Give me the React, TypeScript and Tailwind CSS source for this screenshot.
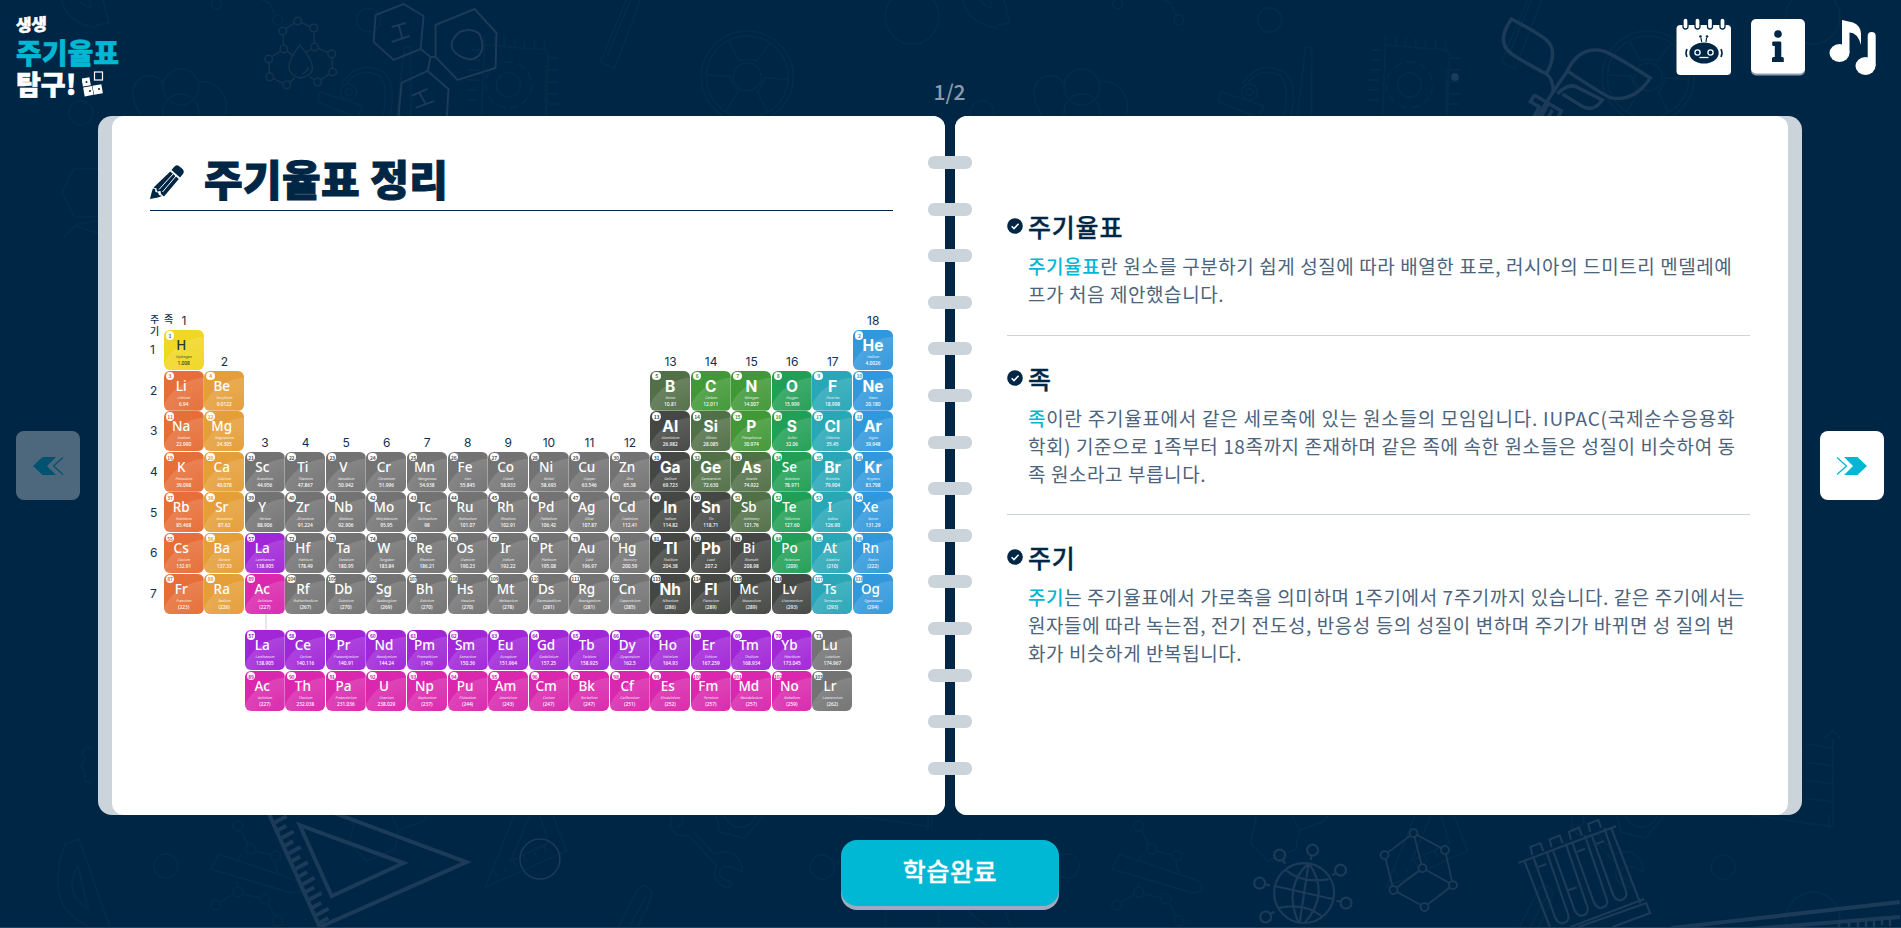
import React from 'react';
import clsx from 'clsx';

type Tone =
  | 'yellow' | 'orange' | 'amber' | 'gray' | 'dark' | 'olive'
  | 'green' | 'emerald' | 'teal' | 'blue' | 'purple' | 'pink';

interface ElementInfo {
  z: number;
  symbol: string;
  name: string;
  mass: string;
  col: number;
  row: number;
  tone: Tone;
}

const toneBg: Record<Tone, string> = {
  yellow: 'bg-[#f0d722]',
  orange: 'bg-[#e66e38]',
  amber: 'bg-[#e59e38]',
  gray: 'bg-[#737373]',
  dark: 'bg-[#444744]',
  olive: 'bg-[#527048]',
  green: 'bg-[#419837]',
  emerald: 'bg-[#229f56]',
  teal: 'bg-[#29a7b7]',
  blue: 'bg-[#3198dc]',
  purple: 'bg-[#a126d8]',
  pink: 'bg-[#da27ad]',
};

const toneText: Record<Tone, string> = {
  yellow: 'text-[#5a5a20]',
  orange: 'text-[#e66e38]',
  amber: 'text-[#e59e38]',
  gray: 'text-[#555]',
  dark: 'text-[#444744]',
  olive: 'text-[#527048]',
  green: 'text-[#419837]',
  emerald: 'text-[#229f56]',
  teal: 'text-[#29a7b7]',
  blue: 'text-[#3198dc]',
  purple: 'text-[#a126d8]',
  pink: 'text-[#da27ad]',
};

const periods: string[][] = [
  ['1 H Hydrogen 1.008 1', '2 He Helium 4.0026 18'],
  ['3 Li Lithium 6.94 1', '4 Be Beryllium 9.0122 2', '5 B Boron 10.81 13', '6 C Carbon 12.011 14', '7 N Nitrogen 14.007 15', '8 O Oxygen 15.999 16', '9 F Fluorine 18.998 17', '10 Ne Neon 20.180 18'],
  ['11 Na Sodium 22.990 1', '12 Mg Magnesium 24.305 2', '13 Al Aluminium 26.982 13', '14 Si Silicon 28.085 14', '15 P Phosphorus 30.974 15', '16 S Sulfur 32.06 16', '17 Cl Chlorine 35.45 17', '18 Ar Argon 39.948 18'],
  ['19 K Potassium 39.098 1', '20 Ca Calcium 40.078 2', '21 Sc Scandium 44.956 3', '22 Ti Titanium 47.867 4', '23 V Vanadium 50.942 5', '24 Cr Chromium 51.996 6', '25 Mn Manganese 54.938 7', '26 Fe Iron 55.845 8', '27 Co Cobalt 58.933 9', '28 Ni Nickel 58.693 10', '29 Cu Copper 63.546 11', '30 Zn Zinc 65.38 12', '31 Ga Gallium 69.723 13', '32 Ge Germanium 72.630 14', '33 As Arsenic 74.922 15', '34 Se Selenium 78.971 16', '35 Br Bromine 79.904 17', '36 Kr Krypton 83.798 18'],
  ['37 Rb Rubidium 85.468 1', '38 Sr Strontium 87.62 2', '39 Y Yttrium 88.906 3', '40 Zr Zirconium 91.224 4', '41 Nb Niobium 92.906 5', '42 Mo Molybdenum 95.95 6', '43 Tc Technetium 98 7', '44 Ru Ruthenium 101.07 8', '45 Rh Rhodium 102.91 9', '46 Pd Palladium 106.42 10', '47 Ag Silver 107.87 11', '48 Cd Cadmium 112.41 12', '49 In Indium 114.82 13', '50 Sn Tin 118.71 14', '51 Sb Antimony 121.76 15', '52 Te Tellurium 127.60 16', '53 I Iodine 126.90 17', '54 Xe Xenon 131.29 18'],
  ['55 Cs Cesium 132.91 1', '56 Ba Barium 137.33 2', '57 La Lanthanum 138.905 3', '72 Hf Hafnium 178.49 4', '73 Ta Tantalum 180.95 5', '74 W Tungsten 183.84 6', '75 Re Rhenium 186.21 7', '76 Os Osmium 190.23 8', '77 Ir Iridium 192.22 9', '78 Pt Platinum 195.08 10', '79 Au Gold 196.97 11', '80 Hg Mercury 200.59 12', '81 Tl Thallium 204.38 13', '82 Pb Lead 207.2 14', '83 Bi Bismuth 208.98 15', '84 Po Polonium (209) 16', '85 At Astatine (210) 17', '86 Rn Radon (222) 18'],
  ['87 Fr Francium (223) 1', '88 Ra Radium (226) 2', '89 Ac Actinium (227) 3', '104 Rf Rutherfordium (267) 4', '105 Db Dubnium (270) 5', '106 Sg Seaborgium (269) 6', '107 Bh Bohrium (270) 7', '108 Hs Hassium (270) 8', '109 Mt Meitnerium (278) 9', '110 Ds Darmstadtium (281) 10', '111 Rg Roentgenium (281) 11', '112 Cn Copernicium (285) 12', '113 Nh Nihonium (286) 13', '114 Fl Flerovium (289) 14', '115 Mc Moscovium (289) 15', '116 Lv Livermorium (293) 16', '117 Ts Tennessine (293) 17', '118 Og Oganesson (294) 18'],
  [],
  ['57 La Lanthanum 138.905 3', '58 Ce Cerium 140.116 4', '59 Pr Praseodymium 140.91 5', '60 Nd Neodymium 144.24 6', '61 Pm Promethium (145) 7', '62 Sm Samarium 150.36 8', '63 Eu Europium 151.964 9', '64 Gd Gadolinium 157.25 10', '65 Tb Terbium 158.925 11', '66 Dy Dysprosium 162.5 12', '67 Ho Holmium 164.93 13', '68 Er Erbium 167.259 14', '69 Tm Thulium 168.934 15', '70 Yb Ytterbium 173.045 16', '71 Lu Lutetium 174.967 17'],
  ['89 Ac Actinium (227) 3', '90 Th Thorium 232.038 4', '91 Pa Protactinium 231.036 5', '92 U Uranium 238.029 6', '93 Np Neptunium (237) 7', '94 Pu Plutonium (244) 8', '95 Am Americium (243) 9', '96 Cm Curium (247) 10', '97 Bk Berkelium (247) 11', '98 Cf Californium (251) 12', '99 Es Einsteinium (252) 13', '100 Fm Fermium (257) 14', '101 Md Mendelevium (257) 15', '102 No Nobelium (259) 16', '103 Lr Lawrencium (262) 17'],
];

const boldSymbols = 'B C N O F He Ne Al Si P S Cl Ar Ga Ge As Br Kr In Sn Tl Pb Nh Fl'.split(' ');

const getTone = (symbol: string, z: number, col: number): Tone => {
  if (symbol === 'H') return 'yellow';
  if (z >= 57 && z <= 70) return 'purple';
  if (z >= 89 && z <= 102) return 'pink';
  if (z === 71 || z === 103) return 'gray';
  if (col === 1) return 'orange';
  if (col === 2) return 'amber';
  if (col < 13) return 'gray';
  if (['B', 'Si', 'Ge', 'As', 'Sb'].includes(symbol)) return 'olive';
  if (['C', 'N', 'P'].includes(symbol)) return 'green';
  if (symbol === 'Lv' || col < 16) return 'dark';
  if (col === 16) return 'emerald';
  return col === 17 ? 'teal' : 'blue';
};

const elements: ElementInfo[] = periods.flatMap((items, row) =>
  items.map((item) => {
    const [z, symbol, name, mass, col] = item.split(' ');
    return { z: +z, symbol, name, mass, col: +col, row: row + 2, tone: getTone(symbol, +z, +col) };
  })
);

// [group number, grid row the label sits in]
const groupLabels: [number, number][] = [
  [1, 1], [2, 2], [3, 4], [4, 4], [5, 4], [6, 4], [7, 4], [8, 4], [9, 4],
  [10, 4], [11, 4], [12, 4], [13, 2], [14, 2], [15, 2], [16, 2], [17, 2], [18, 1],
];

const ElementTile: React.FC<{ el: ElementInfo }> = ({ el }) => {
  const bold = boldSymbols.includes(el.symbol);
  return (
    <div
      className={clsx(
        'relative flex h-10 w-10 flex-col items-center overflow-hidden rounded-[6px] ring-[0.5px] ring-white/60',
        toneBg[el.tone],
        el.tone === 'yellow' ? 'text-[#1d3a35]' : 'text-white'
      )}
      style={{ gridColumn: el.col + 1, gridRow: el.row }}
    >
      <div className="absolute inset-0 bg-[radial-gradient(circle_at_44px_56px,transparent_10px,rgba(255,255,255,0.13)_49px,transparent_50px)]" />
      <span
        className={clsx(
          'absolute left-[2px] top-[1px] flex h-[8.5px] w-[8.5px] items-center justify-center rounded-full bg-white text-[5px] font-bold leading-none tracking-tighter',
          toneText[el.tone]
        )}
      >
        {el.z}
      </span>
      <span
        className={clsx(
          'relative mt-[7px] leading-[17px]',
          bold ? "font-['Inter',sans-serif] text-[15.5px] font-bold" : "pr-[5px] font-['Noto_Sans',sans-serif] text-[13.5px] font-medium"
        )}
      >
        {el.symbol}
      </span>
      <span className="relative text-[3.5px] italic leading-[6px] opacity-90">{el.name}</span>
      <span className="relative font-['Noto_Sans',sans-serif] text-[4.8px] font-medium leading-[7px]">{el.mass}</span>
    </div>
  );
};

const PeriodicTable: React.FC = () => (
  <div className="grid grid-cols-[13.7px_repeat(18,40.55px)] grid-rows-[21px_repeat(7,40.6px)_16px_40.6px_40.6px] text-xs text-[#0f3050]">
    <div className="relative font-medium">
      <span className="absolute left-0 top-[4px] w-3 text-[10px] leading-[12px]">주 기</span>
      <span className="absolute left-[14px] top-[4px] text-[10px] leading-[12px]">족</span>
    </div>
    {groupLabels.map(([group, row]) => (
      <div
        key={group}
        className="flex items-end justify-center pb-[3px] font-['Inter',sans-serif] text-[12px] leading-[13px]"
        style={{ gridColumn: group + 1, gridRow: row }}
      >
        {group}
      </div>
    ))}
    {[1, 2, 3, 4, 5, 6, 7].map((p) => (
      <div key={p} className="flex items-center font-['Inter',sans-serif] text-[12px]" style={{ gridColumn: 1, gridRow: p + 1 }}>
        {p}
      </div>
    ))}
    <div className="ml-5 w-0.5 bg-gray-200" style={{ gridColumn: 4, gridRow: 9 }} />
    {elements.map((el) => (
      <ElementTile key={`${el.row}-${el.z}`} el={el} />
    ))}
  </div>
);

const sections = [
  {
    title: '주기율표',
    keyword: '주기율표',
    lines: ['란 원소를 구분하기 쉽게 성질에 따라 배열한 표로, 러시아의 드미트리 멘델레예', '프가 처음 제안했습니다.'],
  },
  {
    title: '족',
    keyword: '족',
    lines: [
      '이란 주기율표에서 같은 세로축에 있는 원소들의 모임입니다. IUPAC(국제순수응용화',
      '학회) 기준으로 1족부터 18족까지 존재하며 같은 족에 속한 원소들은 성질이 비슷하여 동',
      '족 원소라고 부릅니다.',
    ],
  },
  {
    title: '주기',
    keyword: '주기',
    lines: [
      '는 주기율표에서 가로축을 의미하며 1주기에서 7주기까지 있습니다. 같은 주기에서는',
      '원자들에 따라 녹는점, 전기 전도성, 반응성 등의 성질이 변하며 주기가 바뀌면 성 질의 변',
      '화가 비슷하게 반복됩니다.',
    ],
  },
];

const CheckIcon: React.FC = () => (
  <svg viewBox="0 0 16 16" className="h-4 w-4">
    <circle cx="8" cy="8" r="7.8" fill="#002645" />
    <path d="M4.6 8.2 7 10.6 11.6 5.8" fill="none" stroke="#fff" strokeWidth="1.5" />
  </svg>
);

const PencilIcon: React.FC = () => (
  <svg viewBox="0 0 34 34" className="h-[34px] w-[34px]" fill="#002645">
    <path d="M24 2q2.500-3 5.500-.5l3 2.500q2.500 2.500 0 5.500l-2.500 3L21.500 5z" />
    <path d="m20.300 6.500 8.500 7.500L14 31.500l-3-2.500-.5-3-3.500.5-.5-3-3-1z" />
    <path d="M3 23.500 2 26 0 34 8 32.500l4-1.500-3-1-1-2.500-2.500-.5-.5-3z" />
    <path d="M23.500 8.500 9 24.500M26 11 12.500 27" stroke="#fff" strokeWidth="1" fill="none" />
  </svg>
);

const ArrowIcon: React.FC = () => (
  <svg viewBox="0 0 32 18" className="h-[18px] w-8">
    <path d="M8 0h13.500L31 9l-9.500 9H8l9-9z" fill="#00b8d4" />
    <path d="m1 .5 9.500 8.500L1 17.500" fill="none" stroke="#00b8d4" strokeWidth="1.300" />
  </svg>
);

const RobotNoteIcon: React.FC = () => (
  <svg viewBox="0 0 56 58" className="h-[58px] w-14">
    <rect x=".5" y="7" width="54.500" height="50" rx="4" fill="#fff" />
    {[9.5, 21.5, 34, 46.5].map((x) => (
      <rect key={x} x={x - 2.5} y="0" width="5" height="11" rx="2.500" fill="#fff" stroke="#002645" strokeWidth="1.300" />
    ))}
    <g fill="#002645">
      <ellipse cx="28" cy="35" rx="14.700" ry="10.500" />
      <circle cx="24.500" cy="18.500" r="1.300" />
      <circle cx="31" cy="18.500" r="1.300" />
    </g>
    <path d="m25 20 .7 4M30.500 20l-.5 4" stroke="#002645" strokeWidth="1.200" fill="none" />
    <path d="M11 31q-2 4 0 8M45 31q2 4 0 8" stroke="#002645" strokeWidth="1.600" fill="none" />
    <g fill="none" stroke="#fff" strokeWidth="1.300">
      <circle cx="21.500" cy="34.500" r="2.600" />
      <circle cx="34.500" cy="34.500" r="2.600" />
      <path d="M23.500 39.500h9" />
    </g>
  </svg>
);

const InfoIcon: React.FC = () => (
  <svg viewBox="0 0 55 58" className="h-[58px] w-[55px]">
    <rect y="3" width="54" height="54.500" rx="5" fill="#8f9cb3" />
    <rect y="1" width="54" height="54.500" rx="5" fill="#fff" />
    <g fill="#002645">
      <circle cx="27" cy="16" r="3.800" />
      <path d="M22.500 23.500h6.500q1.300 0 1.300 1.300v14.200h1q1.500 0 1.500 1.500v3.500H21v-3.500q0-1.500 1.500-1.500h1.300V28h-1.300q-1.300 0-1.300-1.300v-1.900q0-1.300 1.300-1.300z" />
    </g>
  </svg>
);

const MusicIcon: React.FC = () => (
  <svg viewBox="0 0 48 56" className="h-14 w-12" fill="#fff">
    <ellipse cx="10.500" cy="33" rx="10" ry="9" />
    <path d="M13 0l11 2.500q7.500 3 8 11v11.500Q28.500 12.500 20.500 12.500V33H13z" />
    <ellipse cx="36.500" cy="46" rx="10" ry="9" />
    <path d="M38.700 16a4 4 0 0 1 8 0v30h-8z" />
  </svg>
);

const Logo: React.FC = () => (
  <div className="absolute left-4 top-3.5 flex flex-col font-black text-white">
    <span className="-skew-y-3 text-[17px] leading-4 tracking-[-0.3px] [-webkit-text-stroke:0.4px_#fff]">생생</span>
    <span className="mt-2 text-[28px] leading-7 text-[#00b8d4] [-webkit-text-stroke:0.6px_#00b8d4]">주기율표</span>
    <div className="mt-1 flex items-center">
      <span className="text-[27px] leading-7 [-webkit-text-stroke:0.6px_#fff]">탐구!</span>
      <svg viewBox="0 0 22 26" className="ml-1.5 h-[26px] w-[22px]">
        <rect x="12.500" y="1" width="8" height="8" fill="none" stroke="#fff" strokeWidth="1.200" />
        <g fill="#fff" transform="rotate(-10 10 18)">
          <rect x="1.500" y="6" width="8" height="8" />
          <rect x="1.500" y="15" width="9" height="9" />
          <rect x="11" y="15" width="9" height="9" />
        </g>
        <g fill="#002645">
          <circle cx="4.500" cy="11" r="1" />
          <circle cx="8" cy="20" r="1" />
          <circle cx="17" cy="18" r="1" />
        </g>
      </svg>
    </div>
  </div>
);

const waterNodes = [
  [297, 21], [282, 31], [283, 49], [268, 59], [269, 77], [286, 85],
  [317, 82], [332, 72], [331, 54], [314, 47], [313, 28],
];
const cubeNodes = [[1414, 834], [1385, 856], [1445.5, 851], [1423, 869], [1394, 891], [1453.5, 886], [1425, 908]];
const globeNodes = [[1313, 851], [1341, 871], [1346.5, 904], [1280, 856], [1260, 884], [1266, 918]];

// Very faint doodles, repeated every 902px
const FaintDoodles: React.FC = () => (
  <g id="faint" fill="none" stroke="#042b48" strokeWidth="2">
    <path d="M61 0q4 22 33 28l2-3 12-2-6-23M78 0q6 8 12 7l-2-7" />
    <path d="M261 0l8 3 5 12M600 62l14 7 26-69M600 62 626 0M607 56 630 0" />
    <circle cx="216" cy="4" r="5" />
    <circle cx="277" cy="20" r="5" />
    <circle cx="368" cy="20" r="12" />
    <circle cx="180" cy="87" r="18" />
    <circle cx="180" cy="112" r="18" />
    <path d="M163 85q-8-13-21-8-14 7-8 27l6 12M198 82q22-2 28 22l-2 12" />
    <circle cx="80" cy="113" r="12" />
    <circle cx="348" cy="92" r="8" />
    <circle cx="348" cy="92" r="3.500" />
    <path d="M341 84q15-25 42-12 14 15 6 44M346 83q13-17 33-7 10 12 3 40M319 92l43 14-5 12-40-16zM396 116l8-69 6 0v69" />
    <path d="M484 45l60 5 4 5-2 61M484 45l-3 71M545 66v50" />
    <circle cx="508" cy="85" r="23" strokeDasharray="9 4" />
    <circle cx="508" cy="85" r="12" />
    <path d="M484 35v10M494 36v10M504 37v10M514 38v10M524 39v10M534 40v10M544 41v10M470 50h10M469 60h11M468 70h11M467 80h11M466 90h11M466 100h11M548 58h10M548 70h10M548 82h10M548 94h10M548 104h10" />
    <circle cx="747" cy="77" r="46" />
    <circle cx="747" cy="77" r="41" />
    <circle cx="747" cy="77" r="14" />
    <path d="m729 42 10 19q8-3 18 0l12-17M706 75l24 1q2 10 8 15l-12 20M788 79l-24-1q-2 10-7 14l10 20" />
    <circle cx="912" cy="17" r="27" />
    <path d="M73 169h25l12 24-12 24H73l-12-24zM75 225l30-6M62 238l12-12 24 8" />
    <path d="M92 750l-6-3-5 7 3 6-4 8 4 6 0 8 8 2" />
    <path d="M64 845l14-5 31 88M64 845q-22 62 22 81M77 867q-16 25 10 43z" />
    <circle cx="165" cy="867" r="12" />
    <circle cx="237" cy="827" r="5" />
    <circle cx="250" cy="850" r="5" />
    <circle cx="275" cy="857" r="5" />
    <circle cx="215" cy="906" r="5" />
    <circle cx="237" cy="893" r="5" />
    <circle cx="264" cy="900" r="5" />
    <circle cx="277" cy="922" r="5" />
    <path d="m240 831 7 15M254 852l17 4M219 903l14-8M241 895l19 4M267 904l8 14M218 855l79 27q8 12-6 12l-81-24zM274 862l3 12M241 855l-6 8M237 888v-5" />
    <path d="m355 815-6 29 17 18 28-12 4-19M398 831l-8-16M398 831l25-9 4-7" />
    <path d="m514 815-29 73 81-36-14-37M530 815l-20 47 38-18-9-29M496 877l-3-6M506 873l-3-6M516 868l-3-6M526 863l-3-6M536 858l-3-6M546 853l-3-6" />
    <path d="m618 928 19-37q7-9 14 1 3 5-14 36M629 928l17-32" />
    <path d="M672 815q-6 17 8 22l8-1 28 30q-6 18 12 23l4-5-12-6q-3-12 12-10l10 5q1-15-14-20-8-1-14 2l-20-22M676 828l7-4-2-9" />
    <path d="m715 815 5 18 24 6 19-22" />
    <circle cx="740" cy="812" r="16" />
    <circle cx="822" cy="868" r="12" />
    <path d="M843 815l90 13M928 815v16M932 740v86M905 745l28 4M905 763l28 4M905 781l28 4M905 799l28 4M923 739l9-8 8 8" />
    <circle cx="912" cy="920" r="27" />
  </g>
);

const Background: React.FC = () => (
  <svg viewBox="0 0 1901 928" className="absolute inset-0 h-full w-full">
    <FaintDoodles />
    <use href="#faint" x="902" />

    <g fill="none" stroke="#1b3b58" strokeWidth="2">
      <path d="m403 4 20 12-3 33-27 11-20-18 2-27zM474 9l22 24-1 35-38 12-22-23V25zM427 71l21 18-2 34-30 10-18-18 3-32z" />
      <path d="m420 49 10 8h5M430 57l-3 14M391 27l14-4M391 42l18-6M398 25l4 14M411 96l16-7M415 108l19-7M419 93l6 11" />
      <path d="M459 32q12-5 20 2 6 13 0 21-9 8-20 1-16-10 0-24z" />
    </g>

    {/* water molecule */}
    <g fill="none" stroke="#14344f" strokeWidth="1.500">
      {waterNodes.slice(1).map(([x, y], i) => (
        i === 5 ? null : <path key={x} d={`M${waterNodes[i][0]} ${waterNodes[i][1]}L${x} ${y}`} />
      ))}
      <path d="M297 21 313 28M283 49l10 7M314 47l-9 6M286 85l8-7M317 82l-8-5" />
      <path d="M299 45q-22 28 1 33 24-5-1-33zM308 67q-2 6-7 7" />
      {waterNodes.map(([x, y]) => (
        <circle key={`${x}-${y}`} cx={x} cy={y} r="3.800" fill="#002645" />
      ))}
    </g>

    {/* plant */}
    <g fill="none" stroke="#1b3b58" strokeWidth="3.500">
      <path d="M1512 19q-15 22-2 33 5 5 37 22 12-22 1-33-6-6-36-22zM1547 74q7 5 7 19" />
      <path d="M1568 71q12-25 36-20 8 2 47 27-16 24-39 20-7-2-44-27zM1568 71l-15 22-16 26" />
      <path d="M1558 94q12-12 21-6l24 12q-8 12-19 7l-21-13M1535 95l27 16-4 8M1535 95l-4 7 9 5-6 11M1549 103l-8 16M1553 110l-5 9" />
    </g>
    <circle cx="1455.500" cy="77" r="4" fill="#1b3b58" />

    {/* set square */}
    <g fill="none" stroke="#1b3b58" strokeWidth="4">
      <path d="m267 812 52 116 147-65-132-49M299 826l104 38-72 33z" />
      {Array.from({ length: 14 }, (_, i) => (
        <path key={i} d={`M${273 + i * 3.5} ${824 + i * 7.7}l${i % 2 ? 9 : 13} -${i % 2 ? 5 : 7}`} />
      ))}
    </g>
    <circle cx="539.500" cy="860" r="20" fill="none" stroke="#1b3b58" strokeWidth="1.500" />

    {/* globe */}
    <g fill="none" stroke="#1b3b58" strokeWidth="2.200">
      <circle cx="1304.500" cy="894" r="30" />
      <path d="M1309 864q-26 24-10 60M1309 864q22 30-4 60M1309 864l-9 60M1275 887l58 13M1286 871q18 14 43 9M1278 909q28-6 45 9" />
      {globeNodes.map(([x, y]) => (
        <g key={y}>
          <circle cx={x} cy={y} r="5.500" />
          <path d={`M${x + (1304.5 - x) * 0.14} ${y + (894 - y) * 0.14}L${x + (1304.5 - x) * 0.23} ${y + (894 - y) * 0.23}`} />
        </g>
      ))}
    </g>

    {/* lattice */}
    <g fill="none" stroke="#1b3b58" strokeWidth="1.800">
      <path d="m1414 834-29 22 9 35 31 17 28.500-22-8-35zM1414 834l9 35-29 22M1423 869l30.500 17" />
      {cubeNodes.map(([x, y]) => (
        <circle key={x} cx={x} cy={y} r="4" fill="#002645" />
      ))}
    </g>

    {/* test tubes */}
    <g fill="none" stroke="#1b3b58" strokeWidth="2.200">
      <path d="m1519 864 98-37M1525.500 863l25 65M1612 829l29 75M1571 928l74-28M1579 928l68-24 4 10-38 14" />
      {[0, 1, 2, 3].map((i) => (
        <g key={i} transform={`translate(${i * 19.3} ${i * -7.7})`}>
          <path d="m1533 856-2-8 10-4 3 8M1534 858l22 61q5 9 12 3 2-3 1-6l-22-64" />
          <path d={i === 1 ? 'm1549 899 9-3' : 'm1539 868 8-3'} />
        </g>
      ))}
    </g>

    {/* ruler */}
    <g stroke="#1b3b58" strokeWidth="4">
      <path d="m1672 929 229-26M1751 930l150-12" />
      <path d="M1840 923v6M1850 922v6M1859 922v6M1867 921v7M1875 920v8M1883 920v6M1891 919v8" strokeWidth="2.500" />
    </g>
  </svg>
);

export default function App() {
  return (
    <div className="relative h-[928px] w-[1901px] overflow-hidden border-b border-[#23435f] bg-[#002645] font-['Noto_Sans_CJK_KR',sans-serif]">
      <Background />
      <Logo />

      <div className="absolute right-6 top-[18px] flex items-start">
        <RobotNoteIcon />
        <div className="ml-[19px]"><InfoIcon /></div>
        <div className="ml-[23px] mt-0.5"><MusicIcon /></div>
      </div>

      <div className="relative flex h-[116px] items-end justify-center pb-[11px] pr-0.5 text-[21px] font-medium leading-7 text-[#8d9bad]">1/2</div>

      <div className="relative flex items-center">
        <button className="ml-4 flex h-[69px] w-16 items-center justify-center rounded-lg bg-white opacity-30">
          <span className="-scale-x-100"><ArrowIcon /></span>
        </button>

        {/* Notebook */}
        <main className="relative ml-[18px] flex h-[699px] w-[1704px] gap-[10px]">
          <section className="flex-1 rounded-xl rounded-l-[14px] bg-[#ccd4db] pl-[14px]">
            <div className="h-full rounded-xl bg-white pl-[38px] pt-[33px]">
              <div className="flex h-[62px] w-[743px] items-center border-b border-[#002645]">
                <div className="pt-1"><PencilIcon /></div>
                <h1 className="ml-5 pb-1 text-[42px] font-black leading-[50px] tracking-[0.4px] text-[#002645] [-webkit-text-stroke:1px_#002645]">주기율표 정리</h1>
              </div>
              <div className="mt-[98px]">
                <PeriodicTable />
              </div>
            </div>
          </section>

          <section className="flex-1 rounded-xl rounded-r-[14px] bg-[#ccd4db] pr-[14px]">
            <div className="h-full rounded-xl bg-white pl-[52px] pt-[68px]">
              {sections.map((s, i) => (
                <div
                  key={s.title}
                  className={clsx('w-[743px] pt-6', i === 0 ? 'pb-[27px]' : 'pb-[26px]', i < 2 && 'border-b border-[#ccd4db]')}
                >
                  <div className="flex items-center gap-[5px] text-[#002645]">
                    <CheckIcon />
                    <h2 className="text-[25px] font-medium leading-9 tracking-[0.8px] [-webkit-text-stroke:0.3px_#002645]">{s.title}</h2>
                  </div>
                  <div className="mt-2 pl-[21px] text-[19px] leading-7 text-[#4b647c]">
                    {s.lines.map((line, j) => (
                      <p key={j} className={clsx('whitespace-nowrap', line.includes('IUPAC') ? 'tracking-[0.75px]' : 'tracking-[0.58px]')}>
                        {j === 0 && <b className="font-medium text-[#00b8d4]">{s.keyword}</b>}
                        {line}
                      </p>
                    ))}
                  </div>
                </div>
              ))}
            </div>
          </section>

          {/* Binding rings */}
          <div className="absolute left-[830px] top-[40px] flex h-[619px] w-11 flex-col justify-between">
            {Array.from({ length: 14 }, (_, i) => (
              <div key={i} className="h-[13px] rounded-md bg-[#ccd4db]" />
            ))}
          </div>
        </main>

        <button className="ml-[18px] flex h-[69px] w-16 items-center justify-center rounded-lg bg-white">
          <ArrowIcon />
        </button>
      </div>

      <div className="relative flex justify-center pr-px pt-[25px]">
        <button className="h-[66px] w-[218px] rounded-2xl bg-[#00b8d4] pb-1 text-[25px] font-medium tracking-[0.6px] text-white shadow-[0_4px_0_#a0abc0] [-webkit-text-stroke:0.3px_#fff]">
          학습완료
        </button>
      </div>
    </div>
  );
}
